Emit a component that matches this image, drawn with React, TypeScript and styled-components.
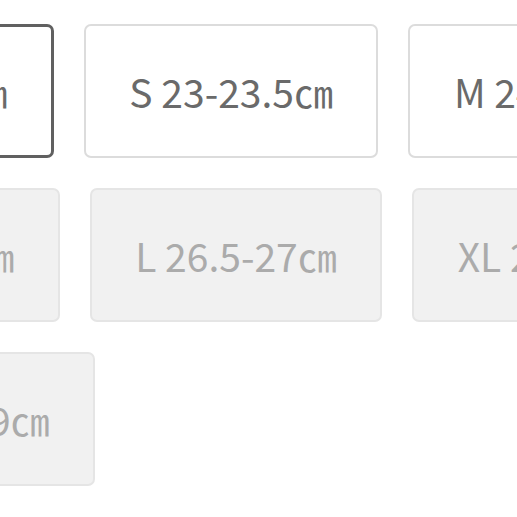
import React from "react";
import styled, { createGlobalStyle, css } from "styled-components";

const Global = createGlobalStyle`
  html, body {
    margin: 0;
    padding: 0;
    background: #ffffff;
    overflow: hidden;
  }
  body {
    font-family: "Noto Sans CJK KR", "Noto Sans", sans-serif;
  }
`;

const Options = styled.div`
  display: flex;
  flex-direction: column;
  gap: 30px;
  padding-top: 24px;
  margin-left: -232px;
  width: 1400px;
`;

const Row = styled.div`
  display: flex;
  gap: 30px;
`;

type State = "selected" | "normal" | "soldout";

const SizeButton = styled.button<{ $state: State }>`
  box-sizing: border-box;
  height: 134px;
  padding: 0 43.5px;
  flex: none;
  display: flex;
  align-items: center;
  justify-content: center;
  border-radius: 7px;
  font-family: "Noto Sans CJK KR", "Noto Sans", sans-serif;
  font-size: 39px;
  font-weight: 400;
  white-space: nowrap;
  background: #ffffff;
  border: 2px solid #dcdcdc;
  color: #6a6a6a;
  cursor: pointer;

  ${(p) =>
    p.$state === "selected" &&
    css`
      border: 3px solid #606060;
    `}

  ${(p) =>
    p.$state === "soldout" &&
    css`
      background: #f1f1f1;
      border-color: #e5e5e5;
      color: #ababab;
      cursor: default;
    `}
`;

const rows: { label: string; state: State }[][] = [
  [
    { label: "XS 22-23㎝", state: "selected" },
    { label: "S 23-23.5㎝", state: "normal" },
    { label: "M 24-24.5㎝", state: "normal" },
  ],
  [
    { label: "ML 25-26㎝", state: "soldout" },
    { label: "L 26.5-27㎝", state: "soldout" },
    { label: "XL 27.5-28㎝", state: "soldout" },
  ],
  [{ label: "XXXL 28-29㎝", state: "soldout" }],
];

export default function App() {
  return (
    <>
      <Global />
      <Options>
        {rows.map((row, i) => (
          <Row key={i}>
            {row.map((opt) => (
              <SizeButton key={opt.label} $state={opt.state} disabled={opt.state === "soldout"}>
                {opt.label}
              </SizeButton>
            ))}
          </Row>
        ))}
      </Options>
    </>
  );
}
